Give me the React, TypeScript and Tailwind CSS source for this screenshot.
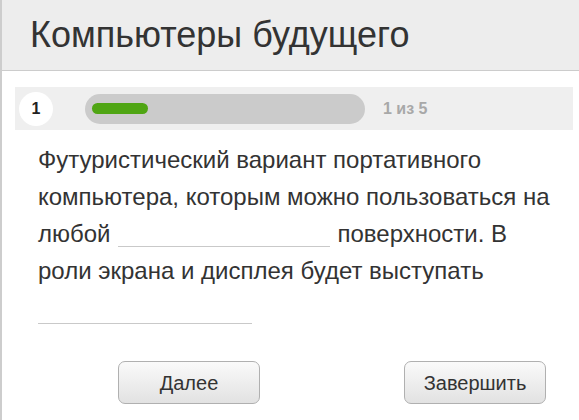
export default function App() {
  return (
    <div
      className="w-[579px] h-[420px] overflow-hidden bg-white border-l-2 border-[#cdcdcd] text-[#333]"
      style={{ fontFamily: '"Liberation Sans", Arial, sans-serif' }}
    >
      <header className="h-[71px] bg-[#ededed] border-b border-[#cccccc] flex items-center pl-[28px]">
        <h1 className="text-[36px] leading-none text-[#333]">Компьютеры будущего</h1>
      </header>

      <div className="mt-[16px] ml-[13px] mr-[6px] h-[43px] bg-[#efefef] flex items-center pl-[4px]">
        <div className="w-[34px] h-[34px] rounded-full bg-white flex items-center justify-center text-[16px] font-bold text-[#222]">
          1
        </div>
        <div className="ml-[32px] w-[280px] h-[30px] rounded-full bg-[#cbcbcb] flex items-center pl-[7px]">
          <div className="w-[56px] h-[11px] rounded-full bg-[#4fa513]" />
        </div>
        <span className="ml-[18px] text-[16px] font-bold text-[#a8a8a8]">1 из 5</span>
      </div>

      <p className="mt-[11px] pl-[36px] text-[24px] leading-[37px] text-[#333] whitespace-nowrap">
        Футуристический вариант портативного
        <br />
        компьютера, которым можно пользоваться на
        <br />
        любой
        <span className="inline-block w-[212px] h-0 align-[-5px] border-b border-[#c9c9c9] ml-[7px] mr-[8px]" />
        поверхности. В
        <br />
        роли экрана и дисплея будет выступать
        <br />
        <span className="inline-block w-[214px] h-0 align-[-8px] border-b border-[#c9c9c9]" />
      </p>

      <div className="mt-[35px] flex justify-between pl-[116px] pr-[33px]">
        <button className="w-[142px] h-[43px] rounded-[7px] border border-[#b0b0b0] bg-gradient-to-b from-[#fafafa] to-[#e2e2e2] text-[20px] text-[#333]">
          Далее
        </button>
        <button className="w-[142px] h-[43px] rounded-[7px] border border-[#b0b0b0] bg-gradient-to-b from-[#fafafa] to-[#e2e2e2] text-[20px] text-[#333]">
          Завершить
        </button>
      </div>
    </div>
  );
}
